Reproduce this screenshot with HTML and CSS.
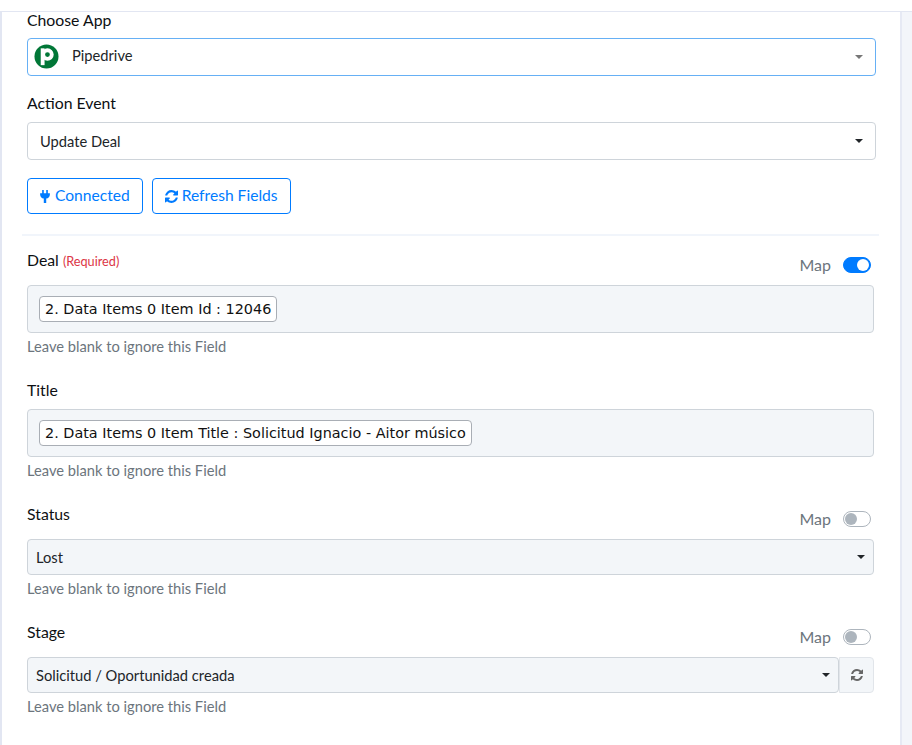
FILE: index.html
```html
<!DOCTYPE html>
<html lang="en">
<head>
    <meta charset="UTF-8">
    <title>Update Deal</title>
    <link rel="stylesheet" href="styles.css">
</head>
<body>
    <div class="top-strip"></div>
    <div class="page">
        <main class="panel">
            <div class="group group-app">
                <div class="label">Choose App</div>
                <div class="select select-focus">
                    <svg class="app-logo" viewBox="0 0 26 26">
                        <circle cx="13" cy="13" r="12.5" fill="#017737"/>
                        <circle cx="14" cy="11" r="4.500" fill="none" stroke="#fff" stroke-width="4"/>
                        <rect x="7" y="4.500" width="4" height="17.500" fill="#fff"/>
                    </svg>
                    <span class="app-name">Pipedrive</span>
                    <span class="caret caret-grey"></span>
                </div>
            </div>

            <div class="group group-event">
                <div class="label">Action Event</div>
                <div class="select">
                    <span class="select-text">Update Deal</span>
                    <span class="caret"></span>
                </div>
            </div>

            <div class="actions">
                <button class="btn btn-connected">
                    <svg class="icon-plug" viewBox="0 0 12 16">
                        <path fill="currentColor" d="M2.500 0h2v4h3V0h2v4H12v1.400c0 2.800-1.800 4.800-4.500 5.200V16h-3v-5.400C1.800 10.200 0 8.200 0 5.400V4h2.500z"/>
                    </svg>
                    <span class="btn-text">Connected</span>
                </button>
                <button class="btn btn-refresh">
                    <svg class="icon-refresh" viewBox="0 0 1536 1536">
                        <path fill="currentColor" d="M1511 928q0 5-1 7-64 268-268 434.500t-478 166.500q-146 0-282.500-55t-243.500-157l-129 129q-19 19-45 19t-45-19-19-45v-448q0-26 19-45t45-19h448q26 0 45 19t19 45-19 45l-137 137q71 66 161 102t187 36q134 0 250-65t186-179q11-17 53-117 8-23 30-23h192q13 0 22.500 9.500t9.500 22.500zm25-800v448q0 26-19 45t-45 19h-448q-26 0-45-19t-19-45 19-45l138-138q-148-137-349-137-134 0-250 65t-186 179q-11 17-53 117-8 23-30 23h-199q-13 0-22.500-9.500t-9.500-22.500v-7q65-268 270-434.500t480-166.500q146 0 284 55.500t245 156.500l130-129q19-19 45-19t45 19 19 45z"/>
                    </svg>
                    <span class="btn-text">Refresh Fields</span>
                </button>
            </div>

            <hr class="divider">

            <div class="field field-deal">
                <div class="field-head">
                    <div class="label">Deal <span class="required">(Required)</span></div>
                    <div class="map">Map <span class="toggle toggle-on"></span></div>
                </div>
                <div class="token-box"><span class="token">2. Data Items 0 Item Id : 12046</span></div>
                <div class="hint">Leave blank to ignore this Field</div>
            </div>

            <div class="field field-title">
                <div class="label">Title</div>
                <div class="token-box"><span class="token">2. Data Items 0 Item Title : Solicitud Ignacio - Aitor músico</span></div>
                <div class="hint">Leave blank to ignore this Field</div>
            </div>

            <div class="field field-status">
                <div class="field-head">
                    <div class="label">Status</div>
                    <div class="map">Map <span class="toggle"></span></div>
                </div>
                <div class="select select-grey">
                    <span>Lost</span>
                    <span class="caret"></span>
                </div>
                <div class="hint">Leave blank to ignore this Field</div>
            </div>

            <div class="field field-stage">
                <div class="field-head">
                    <div class="label">Stage</div>
                    <div class="map">Map <span class="toggle"></span></div>
                </div>
                <div class="input-group">
                    <div class="select select-grey">
                        <span>Solicitud / Oportunidad creada</span>
                        <span class="caret"></span>
                    </div>
                    <div class="addon">
                        <svg class="icon-addon" viewBox="0 0 1536 1536">
                            <path fill="currentColor" d="M1511 928q0 5-1 7-64 268-268 434.500t-478 166.500q-146 0-282.500-55t-243.500-157l-129 129q-19 19-45 19t-45-19-19-45v-448q0-26 19-45t45-19h448q26 0 45 19t19 45-19 45l-137 137q71 66 161 102t187 36q134 0 250-65t186-179q11-17 53-117 8-23 30-23h192q13 0 22.500 9.500t9.500 22.500zm25-800v448q0 26-19 45t-45 19h-448q-26 0-45-19t-19-45 19-45l138-138q-148-137-349-137-134 0-250 65t-186 179q-11 17-53 117-8 23-30 23h-199q-13 0-22.500-9.500t-9.500-22.500v-7q65-268 270-434.500t480-166.500q146 0 284 55.500t245 156.500l130-129q19-19 45-19t45 19 19 45z"/>
                        </svg>
                    </div>
                </div>
                <div class="hint">Leave blank to ignore this Field</div>
            </div>
        </main>
        <div class="side"></div>
    </div>
</body>
</html>
```

FILE: styles.css
```css
html, body {
    margin: 0;
    height: 100%;
    overflow: hidden;
}

body {
    background: #fff;
    font-family: 'Lato', sans-serif;
    font-size: 14.7px;
    color: #212529;
}

.top-strip {
    height: 11px;
    border-bottom: 1px solid #e2e6f2;
}

.page {
    display: flex;
    height: 733px;
}

.panel {
    width: 900px;
    box-sizing: border-box;
    border-left: 2px solid #e2e6f2;
    padding: 0 26px 0 25px;
}

.side {
    flex: 1;
    background: #f3f5fa;
    border-left: 2px solid #e6e9f4;
}

.group-app {
    margin-top: -1px;
}

.label {
    font-size: 15.8px;
    line-height: 18px;
    color: #0d0f12;
}

.required {
    font-size: 12.7px;
    color: #dc3545;
}

.select {
    display: flex;
    align-items: center;
    justify-content: space-between;
    box-sizing: border-box;
    height: 38px;
    padding: 0 12px;
    background: #fff;
    border: 1px solid #ced4da;
    border-radius: 4px;
    margin-top: 10px;
}

.select-focus {
    border-color: #66b0f5;
    padding-left: 6px;
}

.select-grey {
    height: 36px;
    padding: 0 8px;
    background: #f3f6f9;
    margin-top: 0;
}

.group-app .select {
    margin-top: 9px;
    margin-right: -2px;
}

.group-event {
    margin-top: 18px;
}

.group-event .select {
    margin-right: -2px;
}

.app-logo {
    width: 25px;
    height: 25px;
    flex: none;
    margin-bottom: 1px;
}

.app-name {
    flex: 1;
    margin-left: 13px;
    padding-bottom: 4px;
}

.select-text {
    padding-bottom: 1px;
}

.caret {
    width: 0;
    height: 0;
    border-top: 4px solid #212529;
    border-left: 4px solid transparent;
    border-right: 4px solid transparent;
}

.caret-grey {
    border-top-color: #777;
}

.actions {
    display: flex;
    gap: 9px;
    margin-top: 18px;
}

.btn {
    display: flex;
    align-items: center;
    height: 36px;
    padding: 0 12px;
    background: #fff;
    border: 1px solid #007bff;
    border-radius: 4px;
    color: #007bff;
    font-family: inherit;
    font-size: 15.6px;
}

.btn-text {
    padding-bottom: 2px;
}

.icon-plug {
    width: 10px;
    height: 13px;
    margin-right: 5px;
}

.icon-refresh {
    width: 13px;
    height: 13px;
    margin-right: 4px;
}

.divider {
    border: 0;
    border-top: 2px solid #f1f5fb;
    margin: 20px -5px 0 -5px;
}

.field-head {
    display: flex;
    justify-content: space-between;
    align-items: flex-start;
}

.map {
    display: flex;
    align-items: center;
    gap: 12px;
    margin-top: 5px;
    margin-right: 3px;
    font-size: 16px;
    color: #6c757d;
    line-height: 18px;
}

.toggle {
    position: relative;
    box-sizing: border-box;
    width: 28px;
    height: 16px;
    background: #fff;
    border: 1px solid #adb5bd;
    border-radius: 8px;
}

.toggle::after {
    content: "";
    position: absolute;
    left: 1px;
    top: 1px;
    width: 12px;
    height: 12px;
    background: #adb5bd;
    border-radius: 50%;
}

.toggle-on {
    background: #007bff;
    border-color: #007bff;
}

.toggle-on::after {
    left: 13px;
    background: #fff;
}

.token-box {
    box-sizing: border-box;
    height: 48px;
    display: flex;
    align-items: center;
    padding: 0 11px;
    background: #f3f6f9;
    border: 1px solid #ced4da;
    border-radius: 4px;
}

.token {
    padding: 3px 5px;
    background: #fff;
    border: 1px solid #a9aeb5;
    border-radius: 4px;
    font-family: 'DejaVu Sans', sans-serif;
    font-size: 14.4px;
    line-height: 18px;
    color: #111;
}

.hint {
    margin-top: 5px;
    line-height: 17px;
    color: #6c757d;
}

.field-deal {
    margin-top: 15px;
}

.field-deal .field-head {
    height: 34px;
}

.field-title {
    margin-top: 26px;
}

.field-title .label {
    margin-bottom: 10px;
}

.field-status {
    margin-top: 26px;
}

.field-status .field-head, .field-stage .field-head {
    height: 34px;
}

.field-stage {
    margin-top: 26px;
}

.input-group {
    display: flex;
}

.input-group .select {
    flex: 1;
}

.addon {
    box-sizing: border-box;
    width: 35px;
    height: 36px;
    display: flex;
    align-items: center;
    justify-content: center;
    background: #f3f6f9;
    border: 1px solid #e1e5ea;
    border-radius: 0 4px 4px 0;
    color: #666;
}

.icon-addon {
    width: 12px;
    height: 12px;
}
```
